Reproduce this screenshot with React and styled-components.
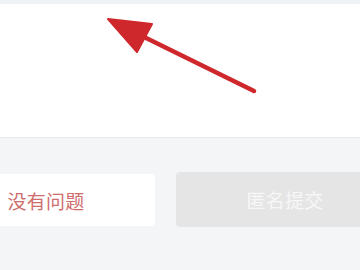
import styled, { createGlobalStyle } from "styled-components";

const GlobalStyle = createGlobalStyle`
  html, body {
    margin: 0;
    padding: 0;
    background: #f4f5f6;
    overflow: hidden;
  }
  body {
    font-family: "Noto Sans CJK SC", "Noto Sans", sans-serif;
  }
`;

const Page = styled.div`
  width: 360px;
  height: 270px;
  display: flex;
  flex-direction: column;
  overflow: hidden;
`;

const TopStrip = styled.div`
  height: 3px;
  background: #eef1f6;
  border-bottom: 1px solid #f1f3f7;
`;

const Canvas = styled.div`
  height: 133px;
  background: #ffffff;
  border-bottom: 1px solid #e6e7e9;
`;

const Footer = styled.div`
  flex: 1;
  background: #f4f5f6;
  padding-top: 36px;
`;

const ButtonRow = styled.div`
  display: flex;
  gap: 21px;
  margin-left: -63px;
`;

const Button = styled.div`
  flex: 0 0 218px;
  height: ${(p) => (p.$primary ? "55px" : "52px")};
  margin-top: ${(p) => (p.$primary ? "-2px" : "0")};
  display: flex;
  align-items: center;
  justify-content: center;
  border-radius: 4px;
  font-size: 19px;
  letter-spacing: 0.3px;
  background: ${(p) => (p.$primary ? "#e5e5e5" : "#ffffff")};
  color: ${(p) => (p.$primary ? "#f7f7f7" : "#cf6d6c")};
`;

function Arrow() {
  return (
    <svg width="360" height="133" viewBox="0 4 360 133">
      <line
        x1="140"
        y1="35"
        x2="254"
        y2="91"
        stroke="#cf282c"
        strokeWidth="4.5"
        strokeLinecap="round"
      />
      <polygon
        points="108,19 152,24 137,52"
        fill="#cf282c"
        stroke="#cf282c"
        strokeWidth="2"
        strokeLinejoin="round"
      />
    </svg>
  );
}

export default function App() {
  return (
    <Page>
      <GlobalStyle />
      <TopStrip />
      <Canvas>
        <Arrow />
      </Canvas>
      <Footer>
        <ButtonRow>
          <Button>没有问题</Button>
          <Button $primary>匿名提交</Button>
        </ButtonRow>
      </Footer>
    </Page>
  );
}
